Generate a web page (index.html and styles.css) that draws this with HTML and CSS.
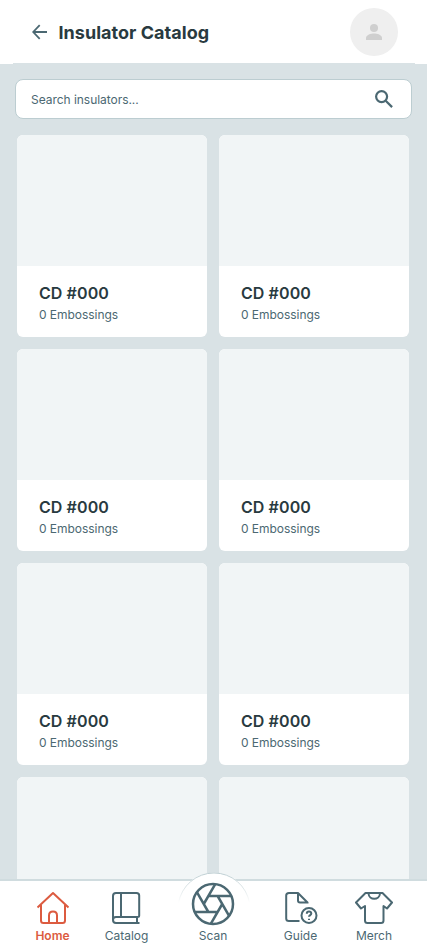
FILE: index.html
```html
<!DOCTYPE html>
<html lang="en">
<head>
<meta charset="utf-8">
<title>Insulator Catalog</title>
<link rel="stylesheet" href="styles.css">
</head>
<body>
<div class="app">
  <header class="header">
    <svg class="back" viewBox="0 0 16 16"><path d="M15 8H1.500M7.700 1.200L1.200 8L7.700 14.800"/></svg>
    <h1 class="title">Insulator Catalog</h1>
    <div class="avatar"><svg viewBox="0 0 16 16"><circle cx="8" cy="4" r="4"/><path d="M0 16v-2.200C0 11 5 9.500 8 9.500s8 1.500 8 4.300V16z"/></svg></div>
  </header>
  <main class="content">
    <div class="search">
      <span>Search insulators...</span>
      <svg class="search-icon" viewBox="0 0 18 18"><circle cx="6.600" cy="6.600" r="5.500"/><path d="M10.700 10.700L17.100 17.100"/></svg>
    </div>
    <div class="cards">
      <article class="card"><div class="photo"></div><h2>CD #000</h2><p>0 Embossings</p></article>
      <article class="card"><div class="photo"></div><h2>CD #000</h2><p>0 Embossings</p></article>
      <article class="card"><div class="photo"></div><h2>CD #000</h2><p>0 Embossings</p></article>
      <article class="card"><div class="photo"></div><h2>CD #000</h2><p>0 Embossings</p></article>
      <article class="card"><div class="photo"></div><h2>CD #000</h2><p>0 Embossings</p></article>
      <article class="card"><div class="photo"></div><h2>CD #000</h2><p>0 Embossings</p></article>
      <article class="card"><div class="photo"></div></article>
      <article class="card"><div class="photo"></div></article>
    </div>
  </main>
  <nav class="nav">
    <svg class="bump" viewBox="0 0 74 40">
      <defs><linearGradient id="fade" x1="0" y1="0" x2="0" y2="1"><stop offset="0" stop-color="#bccdd1"/><stop offset="1" stop-color="#bccdd1" stop-opacity="0"/></linearGradient></defs>
      <circle cx="37" cy="36.500" r="36" fill="#fff"/>
      <path d="M1.500 31A36 36 0 0 1 72.500 31" fill="none" stroke="url(#fade)"/>
    </svg>
    <div class="item active">
      <svg class="icon" viewBox="0 0 34 34"><path d="M1.500 16.500L17 2L32.500 16.500M5 14V29.500Q5 32 7.500 32H26.500Q29 32 29 29.500V14M13 32V24.500Q13 20.500 17 20.500T21 24.500V32"/></svg>
      <span>Home</span>
    </div>
    <div class="item">
      <svg class="icon" viewBox="0 0 34 34"><path d="M28.500 26H6Q3 26 3 29T6 32H29.500M3 29V5Q3 2 6 2H26.500Q29.200 2 29.200 4.500V24.500Q29.200 26 27.500 26M27 26V32M11 2V26"/></svg>
      <span>Catalog</span>
    </div>
    <div class="item scan">
      <svg class="icon aperture" viewBox="0 0 24 24"><circle cx="12" cy="12" r="10"/><path d="M14.310 8L20.050 17.940M9.690 8H21.170M7.380 12L13.120 2.060M9.690 16L3.950 6.060M14.310 16H2.830M16.620 12L10.880 21.940"/></svg>
      <span>Scan</span>
    </div>
    <div class="item">
      <svg class="icon" viewBox="0 0 34 34"><path d="M15.500 30H5Q2.200 30 2.200 27.500V4.500Q2.200 2 5 2H14L23.500 11.500V12.500M14 2V9.500Q14 11.500 16 11.500H23.500"/><circle cx="25" cy="24.500" r="7.500"/><path d="M22.800 22.800Q22.800 20.600 25 20.600T27.300 22.600C27.300 24 25 24.200 25 25.800M25 27.700V29"/></svg>
      <span>Guide</span>
    </div>
    <div class="item">
      <svg class="icon merch" viewBox="0 0 38 34"><path d="M10.500 2H27.500L37 11.500L32 17.500L28.500 15V29.500Q28.500 32 26 32H12.500Q10 32 10 29.500V15L6 17.500L1 11.500L10.500 2ZM13.500 2.500C14 9.500 24.500 9.500 25 2.500"/></svg>
      <span>Merch</span>
    </div>
  </nav>
</div>
</body>
</html>
```
FILE: styles.css
```css
* { box-sizing: border-box; }
body { margin: 0; font-family: Inter, "Liberation Sans", sans-serif; }
h1, h2, p { margin: 0; }
svg { display: block; fill: none; }
.app { height: 952px; display: flex; flex-direction: column; overflow: hidden; background: #d9e2e5; }
.header {
  height: 64px; flex: none; display: flex; align-items: center; padding: 0 28.600px 0 32px;
  background: linear-gradient(#d9e2e5, #d9e2e5) 50% 100% / 402px 1px no-repeat #fff;
}
.back { width: 16px; height: 16px; stroke: #4b6872; stroke-width: 1.8; }
.title { margin: 2px 0 0 10.5px; font-size: 18px; line-height: 24px; font-weight: 700; letter-spacing: 0.03px; color: #293a40; }
.avatar { width: 48px; height: 48px; margin-left: auto; border-radius: 50%; background: #efefef; display: grid; place-items: center; }
.avatar svg { width: 16px; height: 16px; fill: #cfcfcf; }
.content { flex: 1; min-height: 0; overflow: hidden; padding: 15px 15px 0; }
.search {
  height: 40px; display: flex; align-items: center; justify-content: space-between;
  padding: 0 18px 0 15px; border: 1px solid #bccdd1; border-radius: 8px; background: #fff;
  font-size: 12px; letter-spacing: -0.04px; color: #4b6872;
}
.search-icon { width: 18px; height: 18px; stroke: #4b6872; stroke-width: 2.2; }
.cards { display: grid; grid-template-columns: 190px 190px; gap: 12px; padding: 16px 2px 0; }
.card { height: 202px; border-radius: 6px; overflow: hidden; background: #fff; }
.photo { height: 131px; background: #f1f5f6; }
.card h2 { margin: 16px 0 0 22px; font-size: 16px; line-height: 22px; font-weight: 600; letter-spacing: 0.08px; color: #293a40; }
.card p { margin: 3px 0 0 22px; font-size: 12px; line-height: 16px; letter-spacing: -0.04px; color: #4b6872; }
.nav {
  position: relative; flex: none; height: 73px; padding: 11px 0 0 15.5px;
  display: grid; grid-template-columns: 74px 74px 99px 76px 71px;
  background: #fff; border-top: 2px solid #d0dcdf;
}
.bump { position: absolute; left: 176.5px; top: -9.5px; width: 74px; height: 40px; }
.item { position: relative; display: flex; flex-direction: column; align-items: center; font-size: 12px; line-height: 16px; color: #4b6872; }
.item span { margin-top: 3px; }
.scan span { margin-top: 1px; }
.icon { width: 34px; height: 34px; margin-top: -1px; stroke: currentColor; stroke-width: 2; stroke-linejoin: round; }
.merch { width: 38px; }
.aperture { width: 48px; height: 48px; margin: -12px 0 -1px; stroke-width: 1.25; }
.active { color: #dc5b40; font-weight: 600; }
```
